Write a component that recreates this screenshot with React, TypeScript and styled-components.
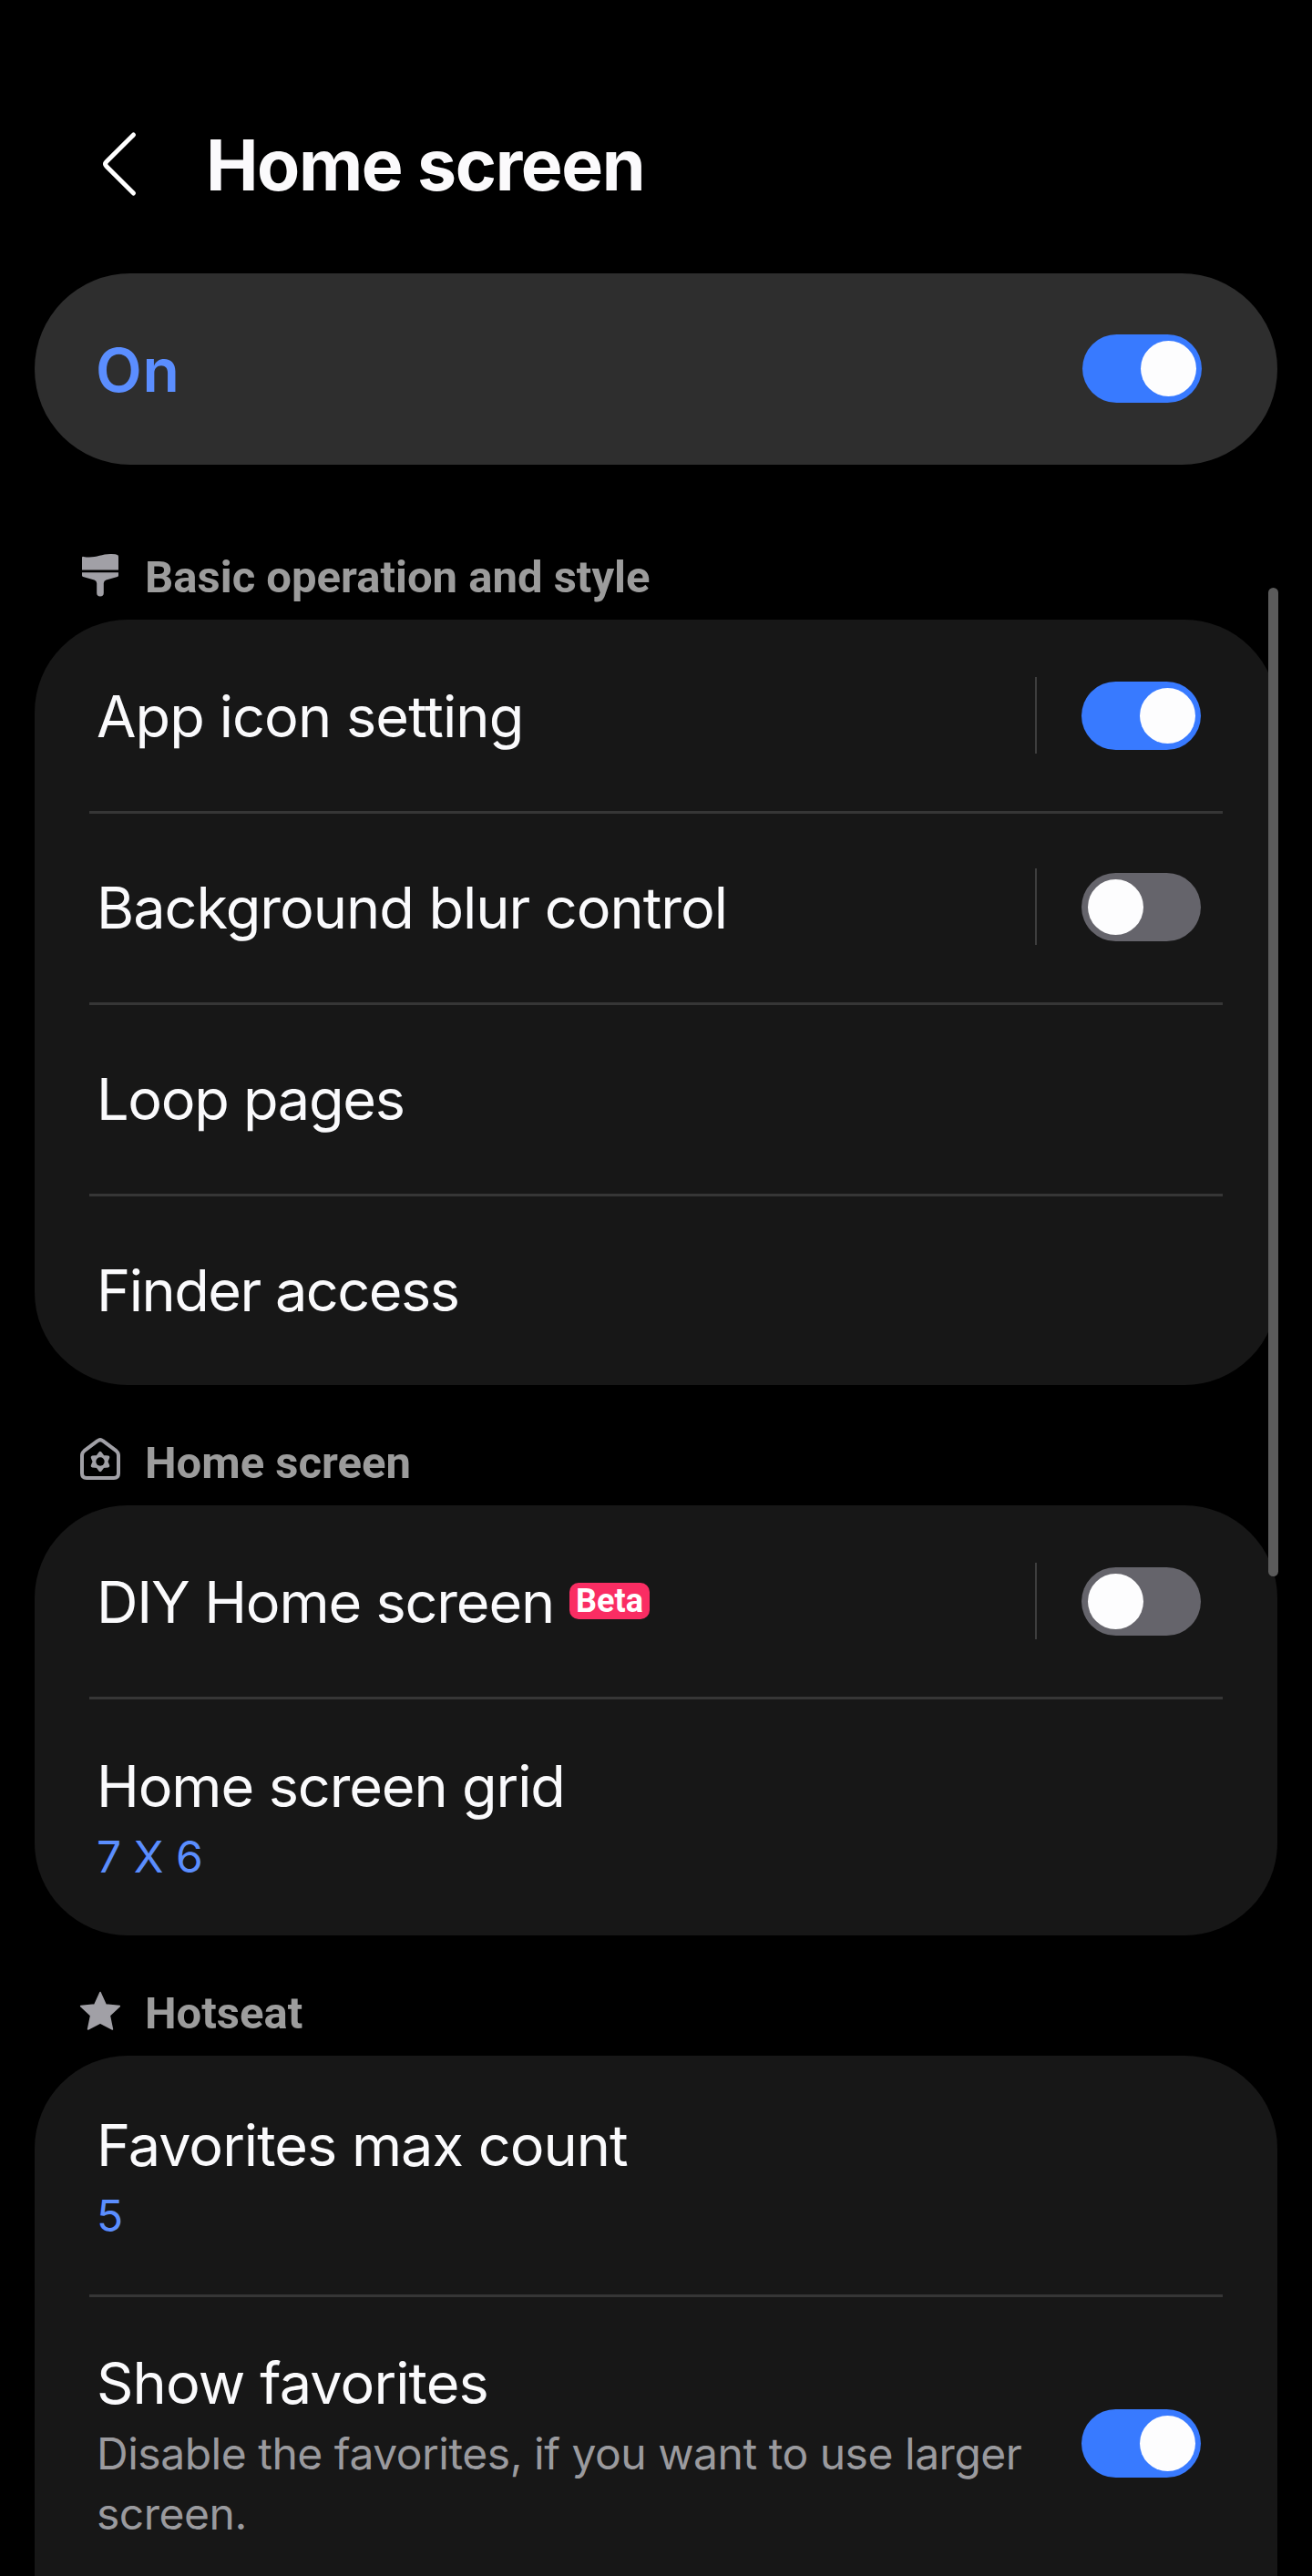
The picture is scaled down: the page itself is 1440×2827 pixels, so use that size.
import React from 'react';
import styled, { createGlobalStyle, css } from 'styled-components';

const GlobalStyle = createGlobalStyle`
  *, *::before, *::after { box-sizing: border-box; }
  html, body { margin: 0; background: #000; }
`;

const uiFont = `Inter, "Liberation Sans", sans-serif`;
const systemFont = `Roboto, "Liberation Sans", sans-serif`;

const Screen = styled.main`
  position: relative;
  width: 1440px;
  height: 2827px;
  padding: 0 38px;
  overflow: hidden;
  background: #000;
  font-family: ${uiFont};
`;

const AppBar = styled.header`
  display: flex;
  align-items: center;
  height: 300px;
  padding: 62px 0 0 72px;
`;

const BackButton = styled.button`
  display: flex;
  width: 116px;
  padding: 0 0 2px;
  border: 0;
  background: none;
`;

const Title = styled.h1`
  margin: 0;
  color: #fbfafc;
  font-size: 77px;
  font-weight: 700;
  line-height: 96px;
  letter-spacing: -1.4px;
`;

const MasterCard = styled.section`
  display: flex;
  align-items: center;
  justify-content: space-between;
  height: 210px;
  padding: 0 83px 1px 67px;
  border-radius: 105px;
  background: #2e2e2e;
`;

const MasterLabel = styled.span`
  padding-top: 3px;
  color: #5b8eff;
  font-size: 66px;
  font-weight: 600;
  line-height: 84px;
  letter-spacing: 0.8px;
`;

const SectionHeader = styled.h2<{ $first?: boolean }>`
  display: flex;
  align-items: center;
  gap: 25px;
  height: 96px;
  margin: ${({ $first }) => ($first ? '74px' : '36px')} 0 0;
  padding-left: 48px;
  color: #9c9c9c;
  font: 700 49px/60px ${systemFont};
`;

const SectionTitle = styled.span`
  padding-top: 3px;
`;

const SectionIcon = styled.svg`
  flex: none;
  width: 48px;
  height: 52px;
  color: #a1a0a6;
`;

const Card = styled.section<{ $continues?: boolean }>`
  padding: 0 60px ${({ $continues }) => ($continues ? '120px' : '0')};
  border-radius: 102px;
  background: #171717;
`;

const Row = styled.div<{ $height: number }>`
  display: flex;
  align-items: center;
  height: ${({ $height }) => $height}px;
  padding: 0 24px 0 8px;

  & + & {
    padding-bottom: 3px;
    border-top: 3px solid #363636;
  }
`;

const RowText = styled.div`
  flex: 1;
  min-width: 0;
  padding-top: 2px;
`;

const Label = styled.div<{ $tracking: number }>`
  display: flex;
  align-items: center;
  color: #fafafc;
  font-size: 63px;
  line-height: 84px;
  letter-spacing: ${({ $tracking }) => $tracking}px;
  white-space: nowrap;
`;

const subText = css`
  margin: 3px 0 -1px;
  font-size: 48px;
  line-height: 66px;
`;

const Value = styled.p`
  ${subText}
  color: #5b8eff;
`;

const Description = styled.p`
  ${subText}
  color: #9a9a9e;
  letter-spacing: -0.48px;
`;

const Badge = styled.span`
  display: flex;
  align-items: center;
  justify-content: center;
  width: 88px;
  height: 40px;
  margin: -2px 0 0 17px;
  border-radius: 10px;
  background: #fa2d63;
  color: #fff;
  font: 700 36px/40px ${systemFont};
  letter-spacing: 0;
`;

const Separator = styled.span`
  width: 2px;
  height: 84px;
  margin: 0 49px 1px 0;
  background: #3e3e3e;
`;

const Track = styled.button<{ $on: boolean }>`
  display: flex;
  flex: none;
  align-items: center;
  justify-content: ${({ $on }) => ($on ? 'flex-end' : 'flex-start')};
  width: 131px;
  height: 75px;
  padding: 0 6px 0 7px;
  border: 0;
  border-radius: 38px;
  background: ${({ $on }) => ($on ? '#387aff' : '#65646b')};
`;

const Knob = styled.span`
  width: 61px;
  height: 61px;
  border-radius: 50%;
  background: #fdfdfe;
`;

const ScrollThumb = styled.div`
  position: absolute;
  top: 645px;
  left: 1392px;
  width: 11px;
  height: 1085px;
  border-radius: 6px;
  background: #5b5b5b;
`;

const Toggle = ({ on }: { on: boolean }) => (
  <Track type="button" role="switch" aria-checked={on} $on={on}>
    <Knob />
  </Track>
);

const BrushIcon = () => (
  <SectionIcon viewBox="0 0 48 52" fill="currentColor">
    <path d="M4 6.2Q4 4.6 5.6 4.9C18 7.2 24 2.2 35 2Q41 1.8 43 3Q44 3.5 44 5V19.5H4Z" />
    <path d="M4 22.2H44V25.5Q44 26.6 42.8 27L30.5 30.6Q28 31.5 27.8 34V44.8A3.7 3.7 0 0 1 20.2 44.8V34Q20 31.500 17.500 30.600L5.200 27Q4 26.600 4 25.500Z" />
  </SectionIcon>
);

const HomeGearIcon = () => (
  <SectionIcon viewBox="0 0 48 52" fill="none" stroke="currentColor" strokeLinejoin="round">
    <path
      d="M21.200 3.200Q24 1 26.800 3.200L41.500 14.200Q44 16.200 44 19.200V39Q44 44 39 44H9Q4 44 4 39V19.200Q4 16.200 6.500 14.200Z"
      strokeWidth="4"
    />
    <path
      d="M24 16.500L27.200 20.700L32.600 21.300L30.600 26L32.600 30.700L27.200 31.300L24 35.500L20.800 31.300L15.400 30.700L17.400 26L15.400 21.300L20.800 20.700Z"
      fill="currentColor"
      strokeWidth="3.400"
    />
    <circle cx="24" cy="26" r="4.700" fill="#000" stroke="none" />
  </SectionIcon>
);

const StarIcon = () => (
  <SectionIcon viewBox="0 0 48 52" fill="currentColor" stroke="currentColor" strokeLinejoin="round">
    <path d="M24 4.500L30.100 18L45.300 19.600L34.300 29.800L37.400 45L24 38L10.600 45L13.700 29.800L2.700 19.600L17.900 18Z" strokeWidth="1.600" />
  </SectionIcon>
);

interface Item {
  label: string;
  tracking: number;
  height?: number;
  badge?: string;
  value?: string;
  description?: string;
  on?: boolean;
  separated?: boolean;
}

interface Group {
  title: string;
  Icon: React.FC;
  items: Item[];
}

const groups: Group[] = [
  {
    title: 'Basic operation and style',
    Icon: BrushIcon,
    items: [
      { label: 'App icon setting', tracking: -0.92, on: true, separated: true },
      { label: 'Background blur control', tracking: -1.02, on: false, separated: true },
      { label: 'Loop pages', tracking: -1.3 },
      { label: 'Finder access', tracking: -1.5 },
    ],
  },
  {
    title: 'Home screen',
    Icon: HomeGearIcon,
    items: [
      { label: 'DIY Home screen', tracking: -1.18, badge: 'Beta', on: false, separated: true },
      { label: 'Home screen grid', tracking: -1.12, value: '7 X 6', height: 262 },
    ],
  },
  {
    title: 'Hotseat',
    Icon: StarIcon,
    items: [
      { label: 'Favorites max count', tracking: -0.98, value: '5', height: 262 },
      {
        label: 'Show favorites',
        tracking: -0.88,
        description: 'Disable the favorites, if you want to use larger screen.',
        on: true,
        height: 326,
      },
    ],
  },
];

const SettingRow = ({ item }: { item: Item }) => (
  <Row $height={item.height ?? 210}>
    <RowText>
      <Label $tracking={item.tracking}>
        {item.label}
        {item.badge && <Badge>{item.badge}</Badge>}
      </Label>
      {item.value && <Value>{item.value}</Value>}
      {item.description && <Description>{item.description}</Description>}
    </RowText>
    {item.separated && <Separator />}
    {item.on !== undefined && <Toggle on={item.on} />}
  </Row>
);

export default function App() {
  return (
    <>
      <GlobalStyle />
      <Screen>
        <AppBar>
          <BackButton type="button" aria-label="Back">
            <svg width="42" height="72" viewBox="0 0 42 72" fill="none" stroke="#fff" strokeWidth="5" strokeLinecap="round" strokeLinejoin="round">
              <path d="M36.500 4L6.800 33.600Q4.400 36 6.800 38.400L36.500 68" />
            </svg>
          </BackButton>
          <Title>Home screen</Title>
        </AppBar>
        <MasterCard>
          <MasterLabel>On</MasterLabel>
          <Toggle on />
        </MasterCard>
        {groups.map(({ title, Icon, items }, index) => (
          <React.Fragment key={title}>
            <SectionHeader $first={index === 0}>
              <Icon />
              <SectionTitle>{title}</SectionTitle>
            </SectionHeader>
            <Card $continues={index === groups.length - 1}>
              {items.map((item) => (
                <SettingRow key={item.label} item={item} />
              ))}
            </Card>
          </React.Fragment>
        ))}
        <ScrollThumb />
      </Screen>
    </>
  );
}
